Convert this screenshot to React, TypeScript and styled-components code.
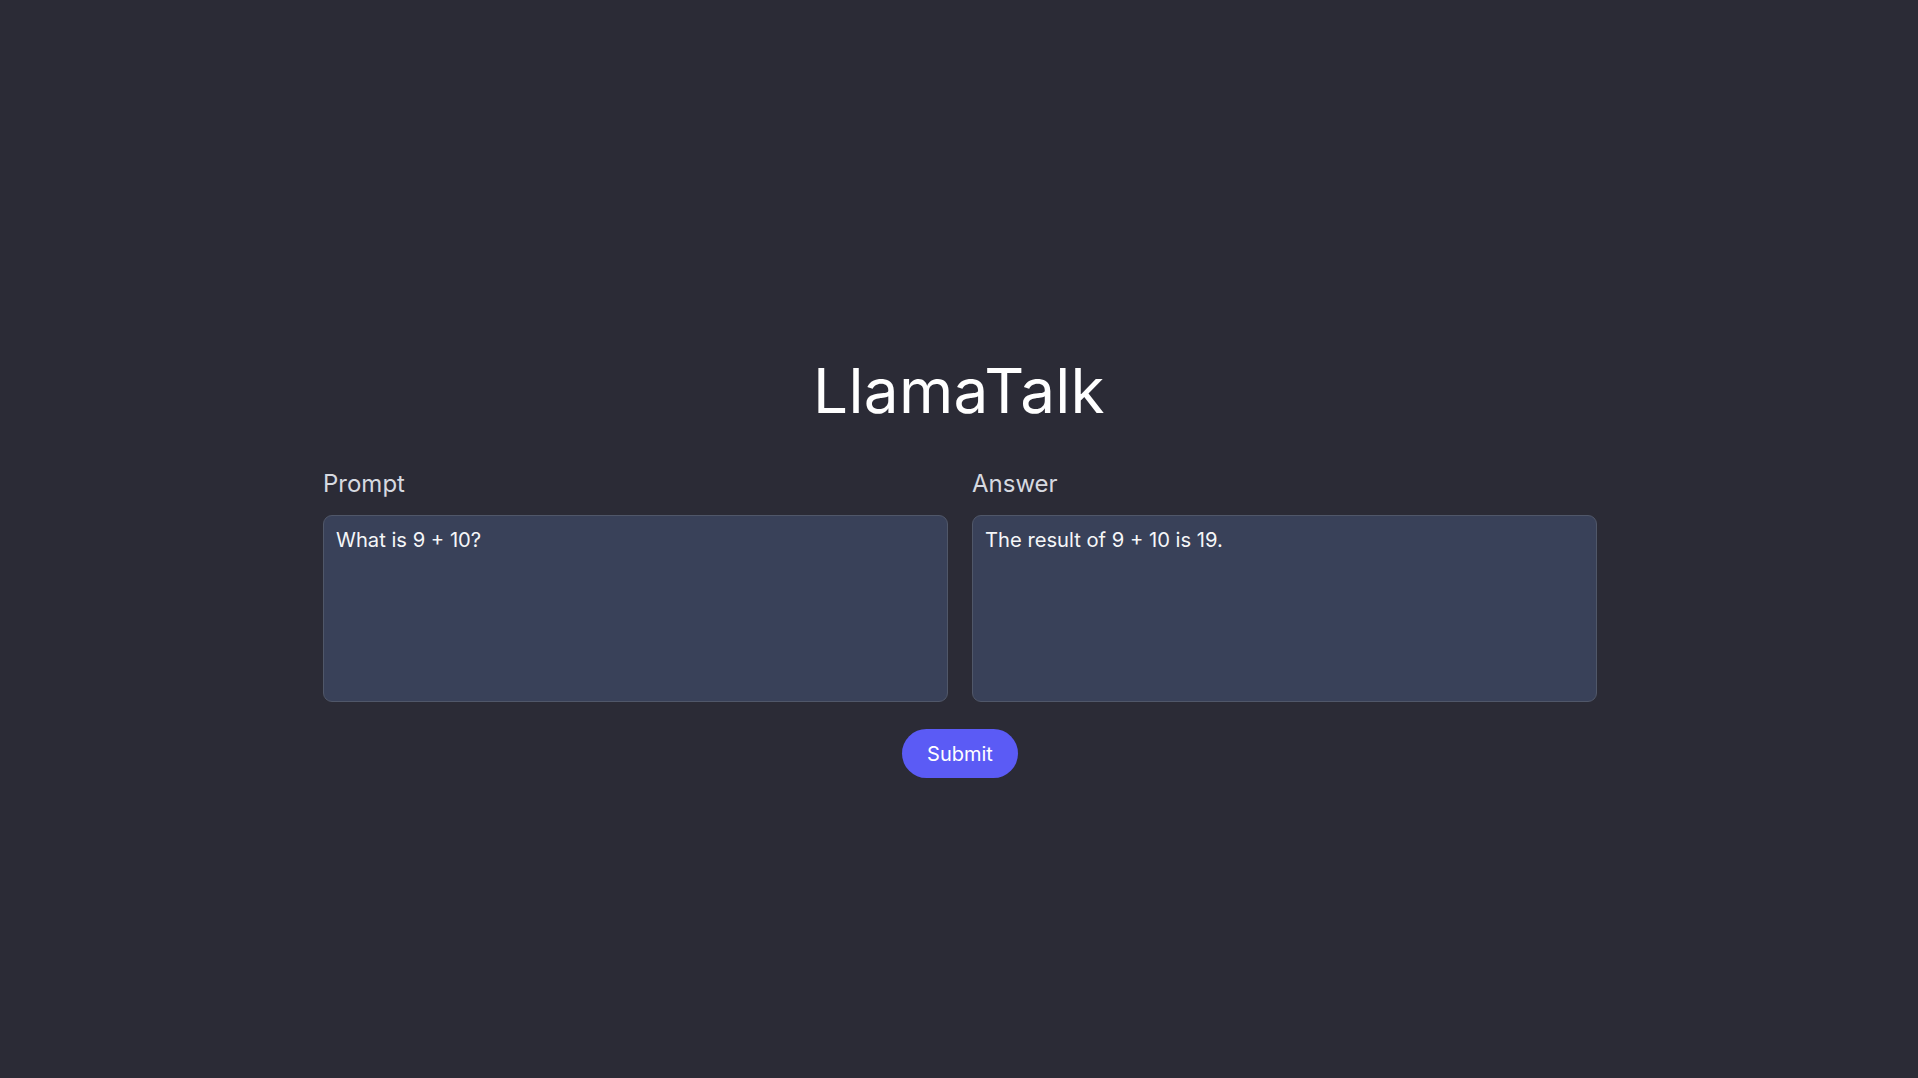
import React from "react";
import styled, { createGlobalStyle } from "styled-components";

const Global = createGlobalStyle`
  html, body {
    margin: 0;
    padding: 0;
    background: #2b2b36;
  }
  body {
    font-family: Inter, "Noto Sans", "Liberation Sans", sans-serif;
    color: #f3f4f6;
  }
`;

const Page = styled.main`
  min-height: 100vh;
  box-sizing: border-box;
  padding-top: 360px;
  display: flex;
  flex-direction: column;
  align-items: center;
`;

const Title = styled.h1`
  margin: 0;
  font-size: 62px;
  line-height: 1;
  font-weight: 400;
  color: #ffffff;
  letter-spacing: 0.3px;
`;

const Columns = styled.div`
  margin: 45px 0 0 2px;
  width: 1274px;
  display: grid;
  grid-template-columns: 1fr 1fr;
  column-gap: 24px;
`;

const Field = styled.div`
  display: flex;
  flex-direction: column;
`;

const Label = styled.label`
  font-size: 24px;
  line-height: 34px;
  color: #d6d9e0;
  margin-bottom: 14px;
`;

const Box = styled.textarea`
  box-sizing: border-box;
  height: 187px;
  width: 100%;
  resize: none;
  margin: 0;
  padding: 9px 12px;
  background: #394159;
  border: 1px solid #505769;
  border-radius: 9px;
  color: #f5f6f8;
  font-family: Inter, "Noto Sans", "Liberation Sans", sans-serif;
  font-size: 20.2px;
  line-height: 30px;
  outline: none;
`;

const SubmitButton = styled.button`
  margin: 27px 0 0 2px;
  height: 49px;
  padding: 0 25.5px;
  border: none;
  border-radius: 999px;
  background: #5b5bf5;
  color: #ffffff;
  font-family: Inter, "Noto Sans", "Liberation Sans", sans-serif;
  font-size: 20px;
  line-height: 30px;
  cursor: pointer;
`;

export default function App() {
  return (
    <>
      <Global />
      <Page>
        <Title>LlamaTalk</Title>
        <Columns>
          <Field>
            <Label>Prompt</Label>
            <Box readOnly value="What is 9 + 10?" />
          </Field>
          <Field>
            <Label>Answer</Label>
            <Box readOnly value="The result of 9 + 10 is 19." />
          </Field>
        </Columns>
        <SubmitButton>Submit</SubmitButton>
      </Page>
    </>
  );
}
